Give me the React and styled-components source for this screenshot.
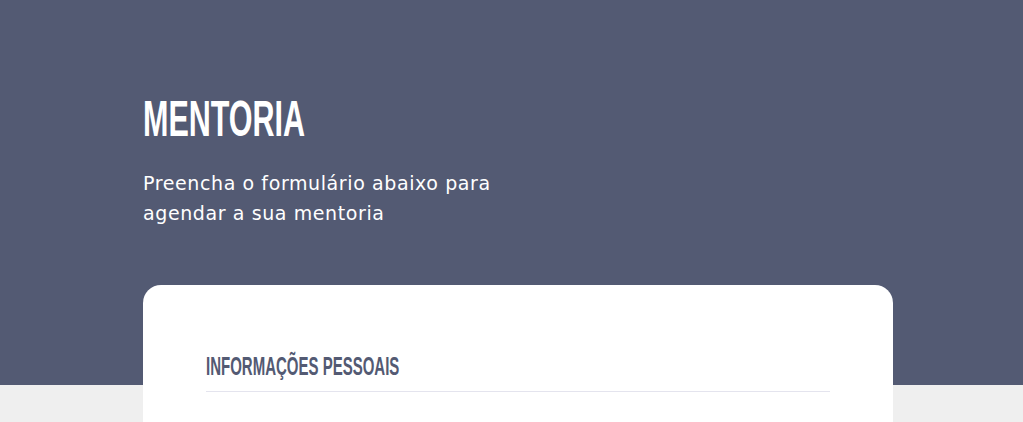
import React from "react";
import styled, { createGlobalStyle } from "styled-components";

const GlobalStyle = createGlobalStyle`
	* {
		box-sizing: border-box;
	}
	body {
		margin: 0;
		background-color: #efefef;
		font-family: "DejaVu Sans", "Open Sans", sans-serif;
		overflow: hidden;
	}
`;

const Hero = styled.header`
	background-color: #535a73;
	height: 385px;
	padding: 94px 0 0 143px;
`;

const Title = styled.h1`
	display: inline-block;
	margin: 0;
	font-family: "Liberation Sans", "Arial", sans-serif;
	font-weight: bold;
	font-size: 50px;
	line-height: 1;
	color: #ffffff;
	transform: scaleX(0.61);
	transform-origin: left center;
`;

const Subtitle = styled.p`
	margin: 24px 0 0 0;
	max-width: 370px;
	font-size: 19px;
	line-height: 30px;
	letter-spacing: 0.6px;
	color: #ffffff;
`;

const Main = styled.main`
	padding-left: 143px;
	margin-top: -100px;
`;

const FormCard = styled.section`
	width: 750px;
	min-height: 300px;
	background-color: #ffffff;
	border-radius: 18px;
	padding: 66px 63px 0 63px;
`;

const SectionTitle = styled.h2`
	margin: 0;
	padding-bottom: 10px;
	border-bottom: 1px solid #e4e4ee;
	font-family: "Liberation Sans", "Arial", sans-serif;
	font-weight: bold;
	font-size: 25px;
	line-height: 30px;
	color: #535a73;
	span {
		display: inline-block;
		transform: scaleX(0.6);
		transform-origin: left center;
	}
`;

function App() {
	return (
		<>
			<GlobalStyle />
			<Hero>
				<Title>MENTORIA</Title>
				<Subtitle>Preencha o formulário abaixo para agendar a sua mentoria</Subtitle>
			</Hero>
			<Main>
				<FormCard>
					<SectionTitle>
						<span>INFORMAÇÕES PESSOAIS</span>
					</SectionTitle>
				</FormCard>
			</Main>
		</>
	);
}

export default App;
